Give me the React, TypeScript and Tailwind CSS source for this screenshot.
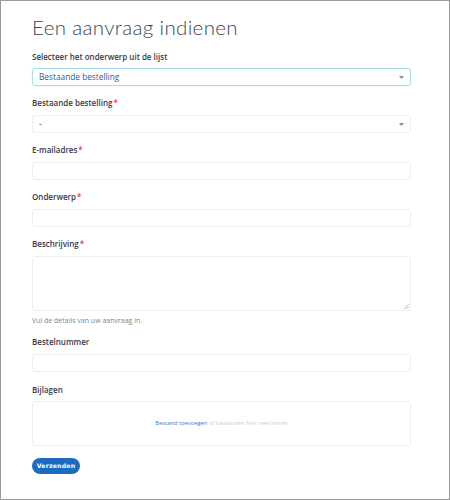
function Label({ text, required }: { text: string; required?: boolean }) {
  return (
    <label className="block h-[12px] text-[8px] leading-[12px] font-semibold text-[#363b47]">
      {text}
      {required && <span className="text-[#e33b3b] ml-[1px]">*</span>}
    </label>
  );
}

function Select({ value, active }: { value: string; active?: boolean }) {
  return (
    <div
      className={
        "flex items-center justify-between h-[18px] rounded-[3px] pl-[6px] pr-[6px] text-[8.3px] " +
        (active
          ? "border border-[#a9dcee] text-[#2c5aa0] shadow-[0_0_2px_#d4eef8]"
          : "border border-[#eceef0] text-[#444]")
      }
    >
      <span>{value}</span>
      <svg width="5" height="3" viewBox="0 0 5 3">
        <path d="M0 0h5L2.5 3z" fill="#8a8a8a" />
      </svg>
    </div>
  );
}

function Input({ h = "h-[18px]" }: { h?: string }) {
  return <div className={`${h} rounded-[3px] border border-[#eceef0] bg-white`} />;
}

export default function App() {
  return (
    <div
      className="w-[450px] h-[500px] border border-[#9a9a9a] bg-white text-[#3a3f4b]"
      style={{ fontFamily: "'Open Sans', 'Noto Sans', sans-serif" }}
    >
      <div className="pl-[31px] pr-[38px] pt-[13px]">
        <h1
          className="text-[20.5px] leading-[26px] font-light text-[#3d4452] tracking-[0.35px]"
          style={{ fontFamily: "Lato, 'Open Sans', sans-serif" }}
        >
          Een aanvraag indienen
        </h1>

        <div className="mt-[11px]">
          <Label text="Selecteer het onderwerp uit de lijst" />
        </div>
        <div className="mt-[5px]">
          <Select value="Bestaande bestelling" active />
        </div>

        <div className="mt-[11px]">
          <Label text="Bestaande bestelling" required />
        </div>
        <div className="mt-[6px]">
          <Select value="-" />
        </div>

        <div className="mt-[11px]">
          <Label text="E-mailadres" required />
        </div>
        <div className="mt-[6px]">
          <Input />
        </div>

        <div className="mt-[11px]">
          <Label text="Onderwerp" required />
        </div>
        <div className="mt-[6px]">
          <Input />
        </div>

        <div className="mt-[11px]">
          <Label text="Beschrijving" required />
        </div>
        <div className="mt-[6px] relative">
          <Input h="h-[55px]" />
          <svg width="5" height="5" viewBox="0 0 5 5" className="absolute right-[2px] bottom-[2px]">
            <path d="M0 5L5 0M2.5 5L5 2.5" stroke="#999" strokeWidth="0.7" />
          </svg>
        </div>
        <p className="mt-[4px] text-[7px] leading-[11px] text-[#7d8593]">
          Vul de details van uw aanvraag in.
        </p>

        <div className="mt-[10px]">
          <Label text="Bestelnummer" />
        </div>
        <div className="mt-[6px]">
          <Input />
        </div>

        <div className="mt-[12px]">
          <Label text="Bijlagen" />
        </div>
        <div className="mt-[5px] h-[45px] rounded-[3px] border border-[#eceef0] flex items-center justify-center text-[5.8px]">
          <span className="text-[#3e78c9]">Bestand toevoegen</span>
          <span className="text-[#c8ccd2] ml-[1.5px]">of bestanden hier neerzetten</span>
        </div>

        <button
          className="mt-[12px] h-[16px] w-[48px] rounded-full bg-[#1b6cbf] text-white text-[6.2px] font-bold tracking-[0.2px]"
          style={{ fontFamily: "'DejaVu Sans', sans-serif" }}
        >
          Verzenden
        </button>
      </div>
    </div>
  );
}
